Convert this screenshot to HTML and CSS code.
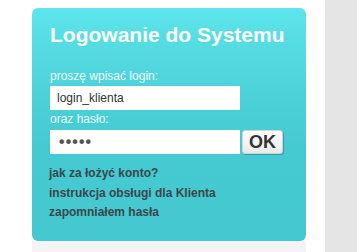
FILE: index.html
```html
<!DOCTYPE html>
<html lang="pl">
<head>
<meta charset="utf-8">
<title>Logowanie do Systemu</title>
<link rel="stylesheet" href="styles.css">
</head>
<body>
<div class="layout">
  <div class="main">
    <form class="panel">
      <h1 class="title">Logowanie do Systemu</h1>
      <label class="label label-first" for="login">proszę wpisać login:</label>
      <div class="row">
        <input class="field" id="login" type="text" value="login_klienta">
      </div>
      <label class="label label-second" for="pass">oraz hasło:</label>
      <div class="row row-second">
        <input class="field field-pass" id="pass" type="password" value="haslo">
        <button class="ok" type="button">OK</button>
      </div>
      <nav class="links">
        <a class="link" href="#">jak za łożyć konto?</a>
        <a class="link" href="#">instrukcja obsługi dla Klienta</a>
        <a class="link" href="#">zapomniałem hasła</a>
      </nav>
    </form>
    <div class="foot"></div>
  </div>
  <div class="side"></div>
</div>
</body>
</html>
```

FILE: styles.css
```css
html, body {
  margin: 0;
  padding: 0;
}
body {
  width: 357px;
  height: 252px;
  overflow: hidden;
  background: #ffffff;
  font-family: "Liberation Sans", Arial, sans-serif;
}
.layout {
  display: flex;
  height: 252px;
  padding-left: 32px;
  box-sizing: border-box;
}
.main {
  width: 274px;
  display: flex;
  flex-direction: column;
  padding-top: 8px;
}
.panel {
  height: 233px;
  box-sizing: border-box;
  margin: 0;
  padding: 14px 18px 0;
  border-radius: 6px;
  background: linear-gradient(#5ce5ea 0%, #4dd2d9 35%, #46cad1 60%, #45c8cf 100%);
  display: flex;
  flex-direction: column;
}
.foot {
  flex: 1;
  background: #f4f4f4;
}
.side {
  margin-left: 19px;
  flex: 1;
  background: #e5e5e5;
}
.title {
  margin: 0;
  font-size: 21px;
  line-height: 25px;
  font-weight: bold;
  color: #ffffff;
}
.label {
  display: block;
  font-size: 12px;
  line-height: 16px;
  color: #effcfc;
}
.label-first {
  margin-top: 21px;
}
.label-second {
  margin-top: 1px;
}
.row {
  display: flex;
  gap: 2px;
  margin-top: 2px;
}
.row-second {
  margin-top: 3px;
}
.field {
  width: 190px;
  height: 24px;
  box-sizing: border-box;
  margin: 0;
  border: none;
  padding: 0 7px;
  background: #ffffff;
  font-family: "Liberation Sans", Arial, sans-serif;
  font-size: 12px;
  color: #333333;
  outline: none;
}
.field-pass {
  font-family: "DejaVu Sans", sans-serif;
  font-size: 16px;
  letter-spacing: -2.8px;
  color: #555555;
}
.ok {
  width: 41px;
  height: 24px;
  box-sizing: border-box;
  margin: 0;
  padding: 0;
  border: 1px solid #d3d3d3;
  border-radius: 3px;
  background: linear-gradient(#ffffff, #e9e9e9);
  box-shadow: 1px 1px 0 rgba(0, 0, 0, 0.22);
  font-family: "Liberation Sans", Arial, sans-serif;
  font-size: 18px;
  font-weight: bold;
  line-height: 22px;
  color: #333333;
}
.links {
  display: flex;
  flex-direction: column;
  margin-top: 10px;
  margin-left: -1px;
}
.link {
  font-size: 12px;
  line-height: 19.5px;
  font-weight: bold;
  color: #3b464b;
  text-decoration: none;
}
```
